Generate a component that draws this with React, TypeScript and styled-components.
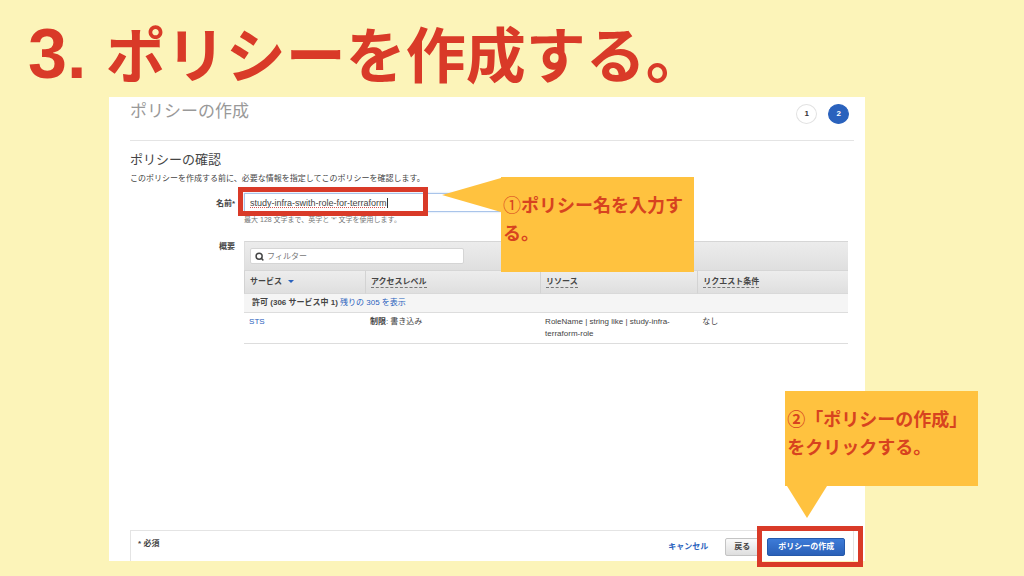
import React from 'react';
import styled, { createGlobalStyle } from 'styled-components';
import { Search } from 'lucide-react';

const colors = {
  page: '#fcf4b9',
  red: '#d93a28',
  callout: '#ffc23f',
  calloutText: '#d7431f',
  blue: '#2a62bd',
  text: '#444',
  line: '#e4e4e4',
};

const GlobalStyle = createGlobalStyle`
  *, *::before, *::after { box-sizing: border-box; }
  body {
    margin: 0;
    background: ${colors.page};
    color: ${colors.text};
    font-family: "Liberation Sans", "Noto Sans CJK JP", sans-serif;
    font-size: 8px;
    line-height: 12px;
  }
  input, button { font-family: inherit; }
  h1, h2, h3, p, ol { margin: 0; padding: 0; }
  a { color: ${colors.blue}; text-decoration: none; }
`;

const Slide = styled.main`
  min-height: 100vh;
  display: flex;
  flex-direction: column;
  padding-bottom: 15px;
`;

const SlideTitle = styled.h1`
  padding: 10px 0 0 28px;
  height: 97px;
  flex: none;
  color: ${colors.red};
  font-size: 60px;
  line-height: 88px;
  font-weight: 700;
  white-space: pre;
`;

const TitleNumber = styled.span`
  font-size: 70px;
`;

const Panel = styled.section`
  position: relative;
  flex: 1;
  display: flex;
  flex-direction: column;
  margin: 0 15.5% 0 10.65%;
  padding: 0 11px 0 21px;
  background: #fff;
`;

const PanelHeader = styled.header`
  height: 44px;
  display: flex;
  justify-content: space-between;
  align-items: flex-start;
  padding-right: 5px;
  border-bottom: 1px solid ${colors.line};
`;

const PanelTitle = styled.h2`
  padding-top: 3px;
  color: #999;
  font-size: 17px;
  line-height: 24px;
  font-weight: 400;
`;

const Steps = styled.ol`
  display: flex;
  gap: 11px;
  padding-top: 7px;
  list-style: none;
`;

const Step = styled.li<{ $current?: boolean }>`
  width: 21px;
  height: 20px;
  display: flex;
  align-items: center;
  justify-content: center;
  border: 1px solid ${(p) => (p.$current ? colors.blue : '#e2e2e2')};
  border-radius: 50%;
  background: ${(p) => (p.$current ? colors.blue : '#fff')};
  color: ${(p) => (p.$current ? '#fff' : '#333')};
  font-weight: 700;
`;

const SectionTitle = styled.h3`
  padding-top: 9px;
  font-size: 13px;
  line-height: 20px;
  font-weight: 400;
`;

const Lead = styled.p`
  padding-top: 3px;
`;

const FieldRow = styled.div<{ $gap: number }>`
  display: flex;
  gap: 9px;
  margin-top: ${(p) => p.$gap}px;
  padding-right: 6px;
`;

const fieldLabel = `
  flex: none;
  width: 105px;
  font-weight: 700;
  text-align: right;
`;

const Label = styled.label`
  ${fieldLabel}
  padding-top: 5px;
`;

const GroupLabel = styled.span`
  ${fieldLabel}
`;

const FieldBody = styled.div`
  position: relative;
  flex: 1;
  min-width: 0;
`;

const NameInput = styled.input`
  display: block;
  width: 45%;
  height: 19px;
  padding: 0 20px 0 5px;
  border: 1px solid #a9c4ea;
  background: #fff;
  box-shadow: 0 0 2px #c3d8f5;
  color: #444;
  font-size: 9px;
  outline: none;
  text-decoration: underline dotted #d9534f 1px;
`;

const Caret = styled.span`
  position: absolute;
  left: 143px;
  top: 5px;
  width: 1px;
  height: 10px;
  background: #333;
`;

const Hint = styled.p`
  padding-top: 2px;
  color: #777;
  font-size: 7px;
`;

const Highlight = styled.span`
  position: absolute;
  border: 5px solid ${colors.red};
  pointer-events: none;
`;

const NameHighlight = styled(Highlight)`
  left: -6px;
  top: -6px;
  width: 190px;
  height: 29px;
`;

const ButtonHighlight = styled(Highlight)`
  inset: -12px -18px -11px -10px;
`;

const Toolbar = styled.div`
  height: 29px;
  padding: 6px 5px;
  border-top: 1px solid #d6d6d6;
  border-left: 1px solid #dedede;
  background: linear-gradient(#ececec, #dfdfdf);
`;

const FilterBox = styled.label`
  display: flex;
  align-items: center;
  gap: 3px;
  width: 36%;
  height: 16px;
  padding: 0 4px;
  border: 1px solid #d5d5d5;
  border-radius: 2px;
  background: #fff;
  color: #444;
`;

const FilterInput = styled.input`
  flex: 1;
  min-width: 0;
  padding: 0;
  border: 0;
  background: none;
  font-size: 8px;
  outline: none;
  &::placeholder { color: #777; opacity: 1; }
`;

const Table = styled.table`
  width: 100%;
  table-layout: fixed;
  border-collapse: separate;
  border-spacing: 0;
  border-bottom: 1px solid #ddd;
`;

const HeadCell = styled.th<{ $width: number }>`
  width: ${(p) => p.$width}%;
  height: 24px;
  padding: 0 5px;
  border-top: 1px solid #d6d6d6;
  border-left: 1px solid #d3d3d3;
  border-bottom: 1px solid #d9d9d9;
  background: linear-gradient(#ededed, #dfdfdf);
  text-align: left;
`;

const Term = styled.span`
  display: inline-block;
  border-bottom: 1px dashed #777;
  line-height: 11px;
`;

const SortArrow = styled.span`
  display: inline-block;
  margin-left: 6px;
  vertical-align: middle;
  border: 3px solid transparent;
  border-top-color: ${colors.blue};
  border-bottom: 0;
`;

const GroupCell = styled.td`
  height: 19px;
  padding: 0 8px;
  border-bottom: 1px solid #ddd;
  background: #f5f5f5;
`;

const Cell = styled.td`
  height: 30px;
  padding: 3px 20px 3px 5px;
  vertical-align: top;
`;

const Footer = styled.footer`
  display: flex;
  justify-content: space-between;
  height: 31px;
  margin-top: auto;
  padding: 7px 8px 0 7px;
  border: 1px solid ${colors.line};
  border-bottom: 0;
`;

const Actions = styled.div`
  display: flex;
  align-items: center;
  height: 18px;
`;

const Cancel = styled.a`
  margin-right: 17px;
  font-weight: 700;
`;

const Button = styled.button<{ $primary?: boolean }>`
  height: 18px;
  padding: 0;
  width: ${(p) => (p.$primary ? 78 : 34)}px;
  border: 1px solid ${(p) => (p.$primary ? '#2559ab' : '#c4c4c4')};
  border-radius: 2px;
  background: ${(p) =>
    p.$primary ? 'linear-gradient(#3d7bd8, #2a60b8)' : 'linear-gradient(#fafafa, #dedede)'};
  color: ${(p) => (p.$primary ? '#fff' : '#444')};
  font-size: 8px;
  line-height: 12px;
  font-weight: 700;
`;

const PrimarySlot = styled.span`
  position: relative;
  display: flex;
  margin-left: 8px;
`;

const Callout = styled.aside`
  position: absolute;
  z-index: 1;
  width: 193px;
  height: 95px;
  padding: 15px 2px;
  background: ${colors.callout};
  color: ${colors.calloutText};
  font-size: 18px;
  line-height: 28px;
  font-weight: 700;
`;

const NameCallout = styled(Callout)`
  left: 392px;
  top: 80px;
`;

const CreateCallout = styled(Callout)`
  right: -113px;
  bottom: 75px;
`;

const CalloutText = styled.p<{ $thinNumber?: boolean }>`
  &::first-letter {
    font-weight: ${(p) => (p.$thinNumber ? 400 : 700)};
  }
`;

const LeftTail = styled.svg`
  position: absolute;
  right: 100%;
  top: 0;
  fill: ${colors.callout};
`;

const BottomTail = styled.svg`
  position: absolute;
  left: 0;
  top: 100%;
  fill: ${colors.callout};
`;

export default function App() {
  return (
    <>
      <GlobalStyle />
      <Slide lang="ja">
        <SlideTitle>
          <TitleNumber>3. </TitleNumber>ポリシーを作成する。
        </SlideTitle>
        <Panel>
          <PanelHeader>
            <PanelTitle>ポリシーの作成</PanelTitle>
            <Steps>
              <Step>1</Step>
              <Step $current aria-current="step">2</Step>
            </Steps>
          </PanelHeader>

          <SectionTitle>ポリシーの確認</SectionTitle>
          <Lead>このポリシーを作成する前に、必要な情報を指定してこのポリシーを確認します。</Lead>

          <FieldRow $gap={8}>
            <Label htmlFor="policy-name">名前*</Label>
            <FieldBody>
              <NameInput
                id="policy-name"
                type="text"
                spellCheck={false}
                defaultValue="study-infra-swith-role-for-terraform"
              />
              <Caret />
              <NameHighlight />
              <Hint>最大 128 文字まで、英字と '*' 文字を使用します。</Hint>
            </FieldBody>
          </FieldRow>

          <FieldRow $gap={15}>
            <GroupLabel>概要</GroupLabel>
            <FieldBody>
              <Toolbar>
                <FilterBox>
                  <Search size={9} strokeWidth={4} aria-hidden />
                  <FilterInput type="text" placeholder="フィルター" aria-label="フィルター" />
                </FilterBox>
              </Toolbar>
              <Table>
                <thead>
                  <tr>
                    <HeadCell $width={20}>サービス<SortArrow /></HeadCell>
                    <HeadCell $width={29}><Term>アクセスレベル</Term></HeadCell>
                    <HeadCell $width={26}><Term>リソース</Term></HeadCell>
                    <HeadCell $width={25}><Term>リクエスト条件</Term></HeadCell>
                  </tr>
                </thead>
                <tbody>
                  <tr>
                    <GroupCell colSpan={4}>
                      <b>許可 (306 サービス中 1)</b> <a href="#rest">残りの 305 を表示</a>
                    </GroupCell>
                  </tr>
                  <tr>
                    <Cell><a href="#sts">STS</a></Cell>
                    <Cell><b>制限</b>: 書き込み</Cell>
                    <Cell>RoleName | string like | study-infra-terraform-role</Cell>
                    <Cell>なし</Cell>
                  </tr>
                </tbody>
              </Table>
            </FieldBody>
          </FieldRow>

          <Footer>
            <b>* 必須</b>
            <Actions>
              <Cancel href="#cancel">キャンセル</Cancel>
              <Button type="button">戻る</Button>
              <PrimarySlot>
                <Button type="button" $primary>ポリシーの作成</Button>
                <ButtonHighlight />
              </PrimarySlot>
            </Actions>
          </Footer>

          <NameCallout>
            <LeftTail width="59" height="36" viewBox="0 0 59 36" aria-hidden>
              <path d="M59 1 0 18 59 35Z" />
            </LeftTail>
            <CalloutText $thinNumber>①ポリシー名を入力する。</CalloutText>
          </NameCallout>
          <CreateCallout>
            <CalloutText>②「ポリシーの作成」をクリックする。</CalloutText>
            <BottomTail width="44" height="32" viewBox="0 0 44 32" aria-hidden>
              <path d="M2 0H42L22 32Z" />
            </BottomTail>
          </CreateCallout>
        </Panel>
      </Slide>
    </>
  );
}
